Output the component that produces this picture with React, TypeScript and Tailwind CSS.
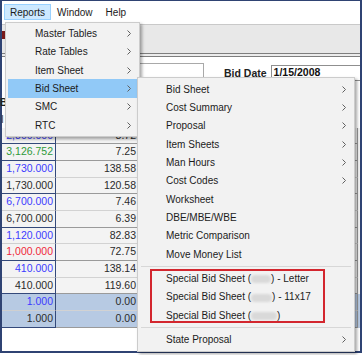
import React from "react";

type Row = { a: string; b: string; c: "blue" | "green" | "black" | "red"; dark: boolean; sel?: boolean };

const rows: Row[] = [
  { a: "2,800.000", b: "8.72", c: "blue", dark: true },
  { a: "3,126.752", b: "7.25", c: "green", dark: true },
  { a: "1,730.000", b: "138.58", c: "blue", dark: false },
  { a: "1,730.000", b: "120.58", c: "black", dark: true },
  { a: "6,700.000", b: "7.46", c: "blue", dark: false },
  { a: "6,700.000", b: "6.39", c: "black", dark: true },
  { a: "1,120.000", b: "82.83", c: "blue", dark: false },
  { a: "1,000.000", b: "72.75", c: "red", dark: true },
  { a: "410.000", b: "138.14", c: "blue", dark: false },
  { a: "410.000", b: "119.60", c: "black", dark: true },
  { a: "1.000", b: "0.00", c: "blue", dark: false, sel: true },
  { a: "1.000", b: "0.00", c: "black", dark: true, sel: true },
];

const colorCls: Record<Row["c"], string> = {
  blue: "text-[#3b3bff]",
  green: "text-[#2f9a3a]",
  black: "text-[#2a2a2a]",
  red: "text-[#f0283a]",
};

function Chevron() {
  return (
    <svg width="4" height="7" viewBox="0 0 4 7" className="shrink-0">
      <polyline points="0.5,0.5 3.5,3.5 0.5,6.5" fill="none" stroke="#606060" strokeWidth="1" />
    </svg>
  );
}

function Item({ label, sub, active }: { label: React.ReactNode; sub?: boolean; active?: boolean }) {
  return (
    <div
      className={
        "h-[18.33px] flex items-center justify-between pr-[6px] whitespace-nowrap " +
        (active ? "bg-[#91c9f7]" : "")
      }
    >
      <span>{label}</span>
      {sub ? <Chevron /> : null}
    </div>
  );
}

function Blur({ w }: { w: string }) {
  return <span className={"inline-block align-middle h-[8px] bg-[#d9d9d9] blur-[1.2px] rounded-sm " + w} />;
}

export default function App() {
  return (
    <div className="relative w-[362px] h-[355px] bg-white overflow-hidden font-['Liberation_Sans',Arial,sans-serif] text-[10px] text-[#1b1b1b]">
      {/* background window */}
      <div className="flex flex-col w-[362px] h-[353px] border-2 border-t-[1.5px] border-[#2f4373] bg-white">
        {/* menubar */}
        <div className="h-[22.5px] flex items-center pl-[2px] bg-white shrink-0">
          <div className="h-[16px] px-[5px] flex items-center bg-[#cce8ff] border border-[#99d1ff]">Reports</div>
          <div className="h-[16px] px-[6px] flex items-center">Window</div>
          <div className="h-[16px] px-[6px] flex items-center ml-[1px]">Help</div>
        </div>
        {/* toolbar band */}
        <div className="h-[29px] shrink-0 bg-[#e8e8e8] border-t border-[#c9c9c9] flex items-start">
          <div className="mt-[6px] w-[3px] h-[8px] bg-[#7a1a1a]" />
        </div>
        <div className="h-[4px] shrink-0 border-y border-[#7e7e7e] bg-[#ececec]" />
        {/* form area */}
        <div className="h-[71.3px] shrink-0 flex items-start bg-white">
          <div className="w-[55px] h-full flex flex-col items-start">
            <div className="mt-[38px] ml-[-2px] font-bold text-[#222]">B</div>
            <div className="mt-[2px] ml-[-1px] text-[#444]">I</div>
          </div>
          <div className="mt-[6px] ml-[5px] w-[142px] h-[18px] border border-[#a9a9a9] bg-white" />
          <div className="mt-[9px] ml-[20px] font-bold text-[10.5px] text-[#222]">Bid Date</div>
          <div className="mt-[8.5px] ml-[4px] flex-1 h-[16px] border border-[#8f8f8f] border-r-0 bg-white pl-[2px] font-bold text-[10.5px] text-[#111] leading-[13px]">
            1/15/2008
          </div>
        </div>
        {/* table */}
        <div className="flex flex-col shrink-0 text-[10.5px]">
          {rows.map((r, i) => (
            <div key={i} className={"flex h-[16.67px] " + (r.sel ? "bg-[#b7cae3]" : "bg-[#f3f3f3]")}>
              <div
                className={
                  "w-[54px] flex items-center justify-end pr-[2px] border-r border-[#34497a] border-b " +
                  (r.dark ? "border-b-[#34497a] " : "border-b-[#cfcfcf] ") +
                  colorCls[r.c]
                }
              >
                {r.a}
              </div>
              <div
                className={
                  "w-[81px] flex items-center justify-end pr-[1px] text-[#2a2a2a] border-b " +
                  (r.dark ? "border-b-[#9a9a9a]" : "border-b-[#d2d2d2]")
                }
              >
                {r.b}
              </div>
              <div
                className={
                  "flex-1 border-b border-r border-r-[#9a9a9a] mr-[2px] " +
                  (r.dark ? "border-b-[#9a9a9a]" : "border-b-[#d2d2d2]")
                }
              />
            </div>
          ))}
        </div>
        <div className="flex-1 bg-white" />
      </div>

      {/* Reports dropdown */}
      <div className="absolute left-[5px] top-[21.5px] w-[135px] bg-[#f2f2f2] border border-[#cccccc] p-[2px] shadow-[2px_2px_3px_rgba(0,0,0,0.35)]">
        <div className="flex flex-col [&>div]:pl-[27px]">
          <Item label="Master Tables" sub />
          <Item label="Rate Tables" sub />
          <Item label="Item Sheet" sub />
          <Item label="Bid Sheet" sub active />
          <Item label="SMC" sub />
          <Item label="RTC" sub />
        </div>
      </div>

      {/* Bid Sheet submenu */}
      <div className="absolute left-[137px] top-[77px] w-[218px] bg-[#f2f2f2] border border-[#cccccc] p-[2px] shadow-[2px_2px_3px_rgba(0,0,0,0.35)]">
        <div className="flex flex-col [&>div]:pl-[26px]">
          <Item label="Bid Sheet" sub />
          <Item label="Cost Summary" sub />
          <Item label="Proposal" sub />
          <Item label="Item Sheets" sub />
          <Item label="Man Hours" sub />
          <Item label="Cost Codes" sub />
          <Item label="Worksheet" />
          <Item label="DBE/MBE/WBE" />
          <Item label="Metric Comparison" />
          <Item label="Move Money List" />
        </div>
        <div className="h-[6px] flex items-center px-[1px]">
          <div className="h-px w-full bg-[#d7d7d7]" />
        </div>
        <div className="relative flex flex-col [&>div]:pl-[26px]">
          <Item
            label={
              <>
                Special Bid Sheet (<Blur w="w-[20px]" />) - Letter
              </>
            }
          />
          <Item
            label={
              <>
                Special Bid Sheet (<Blur w="w-[21px]" />) - 11x17
              </>
            }
          />
          <Item
            label={
              <>
                Special Bid Sheet (<Blur w="w-[26px]" />)
              </>
            }
          />
          <div className="absolute left-[10px] top-0 w-[175px] h-[54px] border-2 border-[#d3262e]" />
        </div>
        <div className="h-[6px] flex items-center px-[1px]">
          <div className="h-px w-full bg-[#d7d7d7]" />
        </div>
        <div className="flex flex-col [&>div]:pl-[26px]">
          <Item label="State Proposal" sub />
        </div>
      </div>
    </div>
  );
}
